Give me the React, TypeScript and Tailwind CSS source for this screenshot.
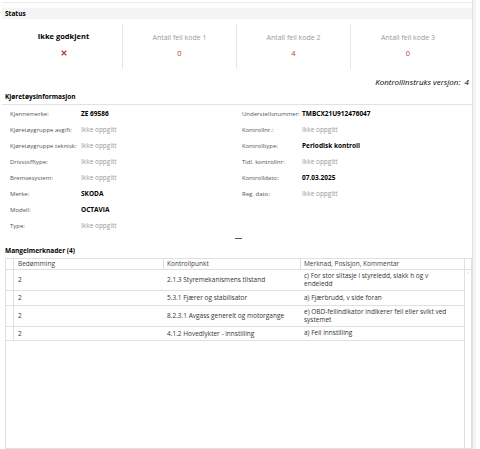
import { X } from 'lucide-react';

const left = [
  { label: 'Kjennemerke:', value: 'ZE 69586', bold: true },
  { label: 'Kjøretøygruppe avgift:', value: 'Ikke oppgitt' },
  { label: 'Kjøretøygruppe teknisk:', value: 'Ikke oppgitt' },
  { label: 'Drivstofftype:', value: 'Ikke oppgitt' },
  { label: 'Bremsesystem:', value: 'Ikke oppgitt' },
  { label: 'Merke:', value: 'SKODA', bold: true },
  { label: 'Modell:', value: 'OCTAVIA', bold: true },
  { label: 'Type:', value: 'Ikke oppgitt' },
];

const right = [
  { label: 'Understellsnummer:', value: 'TMBCX21U912476047', bold: true },
  { label: 'Kontrollnr.:', value: 'Ikke oppgitt' },
  { label: 'Kontrolltype:', value: 'Periodisk kontroll', bold: true },
  { label: 'Tidl. kontrollnr:', value: 'Ikke oppgitt' },
  { label: 'Kontrolldato:', value: '07.03.2025', bold: true },
  { label: 'Reg. dato:', value: 'Ikke oppgitt' },
];

const rows = [
  { grade: '2', point: '2.1.3 Styremekanismens  tilstand', note: 'c) For stor slitasje i styreledd, slakk h og v endeledd' },
  { grade: '2', point: '5.3.1 Fjærer og stabilisator', note: 'a) Fjærbrudd, v side foran' },
  { grade: '2', point: '8.2.3.1 Avgass generelt og motorgange', note: 'e) OBD-feilindikator indikerer feil eller svikt ved systemet' },
  { grade: '2', point: '4.1.2 Hovedlykter - innstilling', note: 'a) Feil innstilling' },
];

const counts = [
  { label: 'Antall feil kode 1', value: '0' },
  { label: 'Antall feil kode 2', value: '4' },
  { label: 'Antall feil kode 3', value: '0' },
];

function InfoRow({ label, value, bold, labelW }: { label: string; value: string; bold?: boolean; labelW: string }) {
  return (
    <div className="flex h-[16px] items-center whitespace-nowrap">
      <span className={`${labelW} shrink-0 text-[6px] text-[#555]`}>{label}</span>
      <span className={bold ? 'text-[6.5px] font-bold text-black' : 'text-[6.5px] text-[#999]'}>{value}</span>
    </div>
  );
}

export default function App() {
  return (
    <div
      className="flex h-[449px] w-[480px] overflow-hidden bg-white text-[6.5px] text-[#333]"
      style={{ fontFamily: '"Open Sans", "Noto Sans", sans-serif' }}
    >
      <div className="flex w-[473px] flex-col border-r border-[#e2e2e2] pl-[2px] pt-[2px]">
        <div className="border-t border-[#ececec] pt-[5px]">
          <div className="flex h-[11px] items-center bg-[#f4f4f4] pl-[3px] font-bold text-black">Status</div>
        </div>

        <div className="mt-[5px] flex pl-[3px]">
          <div className="flex h-[45px] w-[118px] flex-col items-center gap-[7px] border-r border-[#e6e6e6] pt-[7px]">
            <span className="text-[7.5px] font-bold text-black">Ikke godkjent</span>
            <X className="h-[8px] w-[8px] text-[#c0392b]" strokeWidth={3.5} />
          </div>
          {counts.map((c, i) => (
            <div
              key={c.label}
              className={`flex h-[45px] w-[114px] flex-col items-center gap-[7px] pt-[10px] ${i < 2 ? 'border-r border-[#e6e6e6]' : ''}`}
            >
              <span className="text-[7px] leading-[8px] text-[#999]">{c.label}</span>
              <span className="text-[7.5px] leading-[9px] text-[#c0392b]">{c.value}</span>
            </div>
          ))}
        </div>

        <div className="mt-[7px] pr-[3px] text-right text-[8px] italic text-black">
          Kontrollinstruks versjon:&nbsp;&nbsp;4
        </div>

        <div className="mt-[5px] flex h-[12px] items-end border-b border-[#e2e2e2] pb-[2px] pl-[3px] font-bold text-black">
          Kjøretøysinformasjon
        </div>

        <div className="mt-[1px] flex pl-[8px]">
          <div className="w-[232px]">
            {left.map((r) => (
              <InfoRow key={r.label} {...r} labelW="w-[71px]" />
            ))}
          </div>
          <div>
            {right.map((r) => (
              <InfoRow key={r.label} {...r} labelW="w-[60px]" />
            ))}
          </div>
        </div>

        <div className="flex h-[8px] justify-center">
          <div className="ml-[2px] mt-[4px] h-px w-[7px] bg-[#555]" />
        </div>

        <div className="mt-[4px] pl-[3px] font-bold text-black">Mangelmerknader (4)</div>

        <div className="mt-[2px] ml-[3px] flex flex-1 border border-[#e0e0e0]">
          <div className="flex-1">
            <div className="flex h-[11px] border-b border-[#e0e0e0] text-[#444]">
              <div className="w-[8px] border-r border-[#e0e0e0]" />
              <div className="flex w-[150px] items-center border-r border-[#e0e0e0] pl-[4px]">Bedømming</div>
              <div className="flex w-[137px] items-center border-r border-[#e0e0e0] pl-[3px]">Kontrollpunkt</div>
              <div className="flex flex-1 items-center pl-[3px]">Merknad, Posisjon, Kommentar</div>
            </div>
            {rows.map((r) => (
              <div key={r.point} className="flex border-b border-[#e0e0e0] text-[#333]">
                <div className="w-[8px] border-r border-[#e0e0e0]" />
                <div className="flex w-[150px] items-center py-[2px] pl-[4px]">{r.grade}</div>
                <div className="flex w-[137px] items-center py-[2px] pl-[3px]">{r.point}</div>
                <div className="flex flex-1 items-center py-[2px] pl-[3px] pr-[12px] leading-[8px]">{r.note}</div>
              </div>
            ))}
          </div>
          <div className="flex w-[7px] flex-col items-center border-l border-[#e0e0e0]">
            <div className="h-[11px] w-full border-b border-[#e0e0e0]" />
            <span className="mt-[2px] text-[6px] leading-none text-[#888]">˄</span>
          </div>
        </div>
      </div>
      <div className="flex-1 border-l-[3px] border-[#f4f4f4]" />
    </div>
  );
}
